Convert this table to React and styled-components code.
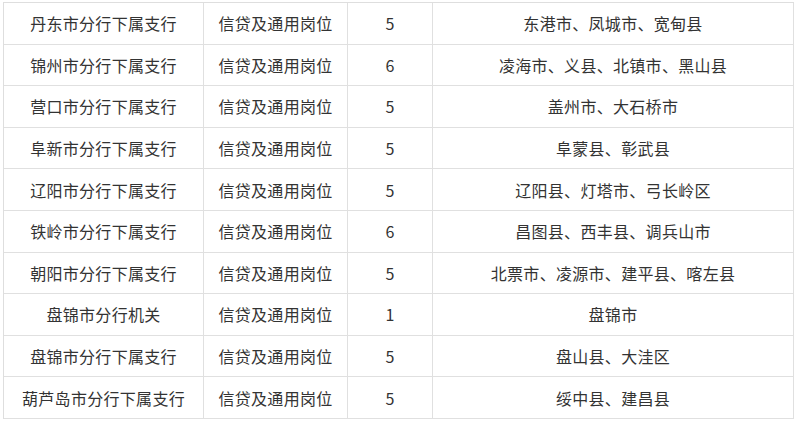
import React from 'react'
import styled, { createGlobalStyle } from 'styled-components'

const Global = createGlobalStyle`
  html, body {
    margin: 0;
    padding: 0;
    background: #fff;
  }
  body {
    font-family: "Noto Sans CJK SC", "Noto Sans", sans-serif;
  }
`

const Wrap = styled.div`
  padding: 2px 0 0 3px;
`

const Table = styled.div`
  display: flex;
  flex-direction: column;
  width: 790px;
  border-top: 1px solid #dedede;
  border-left: 1px solid #dedede;
`

const Row = styled.div`
  display: grid;
  grid-template-columns: 200px 144px 85px 361px;
  height: 41.6px;
`

const Cell = styled.div`
  display: flex;
  align-items: center;
  justify-content: center;
  border-right: 1px solid #e0e0e0;
  border-bottom: 1px solid #e0e0e0;
  font-family: "Noto Sans CJK SC", sans-serif;
  font-size: 16px;
  letter-spacing: 0.3px;
  color: #333;
  white-space: nowrap;
`

const rows = [
  ['丹东市分行下属支行', '信贷及通用岗位', '5', '东港市、凤城市、宽甸县'],
  ['锦州市分行下属支行', '信贷及通用岗位', '6', '凌海市、义县、北镇市、黑山县'],
  ['营口市分行下属支行', '信贷及通用岗位', '5', '盖州市、大石桥市'],
  ['阜新市分行下属支行', '信贷及通用岗位', '5', '阜蒙县、彰武县'],
  ['辽阳市分行下属支行', '信贷及通用岗位', '5', '辽阳县、灯塔市、弓长岭区'],
  ['铁岭市分行下属支行', '信贷及通用岗位', '6', '昌图县、西丰县、调兵山市'],
  ['朝阳市分行下属支行', '信贷及通用岗位', '5', '北票市、凌源市、建平县、喀左县'],
  ['盘锦市分行机关', '信贷及通用岗位', '1', '盘锦市'],
  ['盘锦市分行下属支行', '信贷及通用岗位', '5', '盘山县、大洼区'],
  ['葫芦岛市分行下属支行', '信贷及通用岗位', '5', '绥中县、建昌县'],
]

export default function App() {
  return (
    <Wrap lang="zh-CN">
      <Global />
      <Table>
        {rows.map((r, i) => (
          <Row key={i}>
            {r.map((c, j) => (
              <Cell key={j}>{c}</Cell>
            ))}
          </Row>
        ))}
      </Table>
    </Wrap>
  )
}
